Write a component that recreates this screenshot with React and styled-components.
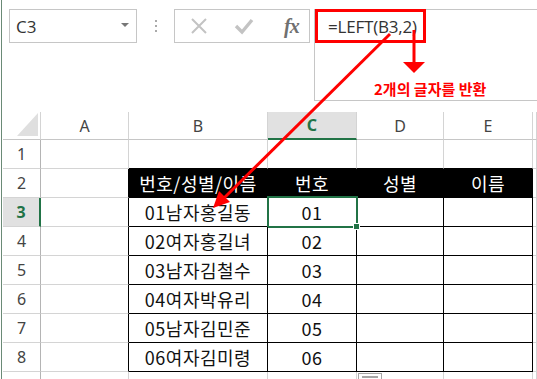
import React from "react";
import styled, { createGlobalStyle, css } from "styled-components";

const GREEN = "#217346";
const GRID = "#d4d4d4";

const Global = createGlobalStyle`
  html, body { margin: 0; padding: 0; background: #fff; overflow: hidden; }
  body { font-family: "Noto Sans", "Noto Sans CJK KR", sans-serif; }
`;

const Page = styled.div`
  position: relative;
  width: 537px;
  height: 379px;
  padding-left: 3px;
  box-sizing: border-box;
  overflow: hidden;
  &::before {
    content: "";
    position: absolute;
    left: 1px;
    top: 0;
    bottom: 0;
    width: 1px;
    background: #6a8a76;
  }
`;

const FormulaRow = styled.div`
  display: flex;
  align-items: flex-start;
  height: 112px;
  padding-top: 9px;
  box-sizing: border-box;
`;

const NameBox = styled.div`
  margin-left: 6px;
  width: 128px;
  height: 34px;
  box-sizing: border-box;
  border: 1px solid #c6c6c6;
  display: flex;
  align-items: center;
  justify-content: space-between;
  padding: 0 7px 0 6px;
  font-family: "Open Sans", sans-serif;
  font-size: 17px;
  color: #333;
`;

const Caret = styled.span`
  width: 0;
  height: 0;
  border-left: 4px solid transparent;
  border-right: 4px solid transparent;
  border-top: 4px solid #777;
  margin-top: -2px;
`;

const Dots = styled.div`
  width: 37px;
  height: 34px;
  display: flex;
  flex-direction: column;
  align-items: center;
  justify-content: center;
  gap: 3px;
  span {
    width: 2px;
    height: 2px;
    background: #aaa;
  }
`;

const FuncBox = styled.div`
  width: 136px;
  height: 34px;
  box-sizing: border-box;
  border: 1px solid #c6c6c6;
  display: flex;
  align-items: center;
  padding-left: 15px;
  gap: 26px;
`;

const Fx = styled.span`
  font-family: "Liberation Serif", serif;
  font-style: italic;
  font-weight: bold;
  font-size: 20px;
  color: #707070;
  letter-spacing: -1px;
  margin-left: 4px;
`;

const FormulaBar = styled.div`
  margin-left: 4px;
  flex: 1;
  height: 92px;
  box-sizing: border-box;
  border: 1px solid #c6c6c6;
  border-right: none;
  padding: 5px 0 0 13px;
  font-family: "Open Sans", sans-serif;
  font-size: 17px;
  letter-spacing: -0.2px;
  color: #333;
`;

const Sheet = styled.div`
  display: grid;
  grid-template-columns: 38px 88px 139px 89px 87px 89px 1fr;
  grid-template-rows: 28px;
  grid-auto-rows: 29px;
`;

const Corner = styled.div`
  position: relative;
  border-right: 1px solid ${GRID};
  border-bottom: 1px solid #c6c6c6;
  &::after {
    content: "";
    position: absolute;
    left: 14px;
    top: 1px;
    width: 21px;
    height: 23px;
    background: #dfdfdf;
    clip-path: polygon(100% 0, 100% 100%, 0 100%);
  }
`;

const ColHead = styled.div`
  display: flex;
  align-items: center;
  justify-content: center;
  font-family: "Noto Sans", sans-serif;
  font-size: 16px;
  color: #444;
  border-right: 1px solid ${GRID};
  border-bottom: 1px solid #c6c6c6;
  ${(p) =>
    p.$active &&
    css`
      background: #e1e1e1;
      color: ${GREEN};
      font-weight: bold;
      border-bottom: 2px solid ${GREEN};
    `}
`;

const RowHead = styled.div`
  display: flex;
  align-items: center;
  justify-content: center;
  font-family: "Noto Sans", sans-serif;
  font-size: 16px;
  color: #444;
  border-right: 1px solid #b4b4b4;
  border-bottom: 1px solid ${GRID};
  ${(p) =>
    p.$active &&
    css`
      background: #e1e1e1;
      color: ${GREEN};
      font-weight: bold;
      border-right: 2px solid ${GREEN};
    `}
`;

const Cell = styled.div`
  position: relative;
  display: flex;
  align-items: center;
  justify-content: center;
  font-family: "Noto Sans CJK KR", sans-serif;
  font-size: 18px;
  letter-spacing: 0.5px;
  color: #111;
  border-right: 1px solid ${(p) => p.$right || GRID};
  border-bottom: 1px solid ${(p) => p.$bottom || GRID};
  ${(p) =>
    p.$head &&
    css`
      background: #000;
      color: #fff;
    `}
  ${(p) =>
    p.$selected &&
    css`
      &::after {
        content: "";
        position: absolute;
        left: -1px;
        top: -2px;
        right: -2px;
        bottom: -2px;
        border: 2px solid ${GREEN};
      }
      &::before {
        content: "";
        position: absolute;
        right: -4px;
        bottom: -4px;
        width: 5px;
        height: 5px;
        background: ${GREEN};
        border: 1px solid #fff;
        z-index: 2;
      }
    `}
`;

const Overlay = styled.svg`
  position: absolute;
  left: 0;
  top: 0;
  pointer-events: none;
`;

const RedBox = styled.div`
  position: absolute;
  left: 315px;
  top: 9px;
  width: 111px;
  height: 34px;
  box-sizing: border-box;
  border: 3px solid #ff0000;
`;

const Note = styled.div`
  position: absolute;
  left: 374px;
  top: 79px;
  line-height: 20px;
  font-family: "Noto Sans CJK KR", sans-serif;
  font-weight: bold;
  font-size: 15px;
  color: #ff0000;
  white-space: nowrap;
`;

const FillOptions = styled.div`
  position: absolute;
  left: 358px;
  top: 373px;
  width: 24px;
  height: 12px;
  box-sizing: border-box;
  border: 1px solid #a6a6a6;
  background: #fff;
  &::after {
    content: "";
    position: absolute;
    left: 3px;
    right: 3px;
    top: 2px;
    height: 2px;
    background: #a6a6a6;
  }
`;

const cols = ["A", "B", "C", "D", "E", ""];
const data = [
  ["01남자홍길동", "01"],
  ["02여자홍길녀", "02"],
  ["03남자김철수", "03"],
  ["04여자박유리", "04"],
  ["05남자김민준", "05"],
  ["06여자김미령", "06"],
];

function rowCells(r) {
  const inTable = r >= 2 && r <= 8;
  const head = r === 2;
  const dataRow = r >= 3 && r <= 8 ? data[r - 3] : null;
  const values = head
    ? ["", "번호/성별/이름", "번호", "성별", "이름", ""]
    : dataRow
    ? ["", dataRow[0], dataRow[1], "", "", ""]
    : ["", "", "", "", "", ""];

  return values.map((v, i) => {
    const tableCol = i >= 1 && i <= 4;
    let right;
    let bottom;
    if (inTable && (tableCol || i === 0)) right = "#000";
    if ((inTable && tableCol) || (r === 1 && tableCol)) bottom = "#000";
    return (
      <Cell
        key={i}
        $right={right}
        $bottom={bottom}
        $head={head && tableCol}
        $selected={r === 3 && i === 2}
      >
        {v}
      </Cell>
    );
  });
}

export default function App() {
  return (
    <>
      <Global />
      <Page>
        <FormulaRow>
          <NameBox>
            C3
            <Caret />
          </NameBox>
          <Dots>
            <span />
            <span />
            <span />
          </Dots>
          <FuncBox>
            <svg width="18" height="18" viewBox="0 0 18 18">
              <path d="M2 2 L16 16 M16 2 L2 16" stroke="#c3c3c3" strokeWidth="2" fill="none" />
            </svg>
            <svg width="20" height="18" viewBox="0 0 20 18">
              <path d="M2 9 L8 15 L18 3" stroke="#c3c3c3" strokeWidth="3.4" fill="none" />
            </svg>
            <Fx>fx</Fx>
          </FuncBox>
          <FormulaBar>=LEFT(B3,2)</FormulaBar>
        </FormulaRow>

        <Sheet>
          <Corner />
          {cols.map((c) => (
            <ColHead key={c || "f"} $active={c === "C"}>
              {c}
            </ColHead>
          ))}
          {[1, 2, 3, 4, 5, 6, 7, 8, 9].map((r) => (
            <React.Fragment key={r}>
              <RowHead $active={r === 3}>{r < 9 ? r : ""}</RowHead>
              {rowCells(r)}
            </React.Fragment>
          ))}
        </Sheet>

        <RedBox />
        <Note>2개의 글자를 반환</Note>
        <FillOptions />
        <Overlay width="537" height="379" viewBox="0 0 537 379">
          <line x1="414" y1="30" x2="414" y2="63" stroke="#ff0000" strokeWidth="3" />
          <polygon points="403,62 425,62 414,73" fill="#ff0000" />
          <line x1="390" y1="34" x2="222" y2="200" stroke="#ff0000" strokeWidth="3" />
          <polygon points="213,208 219,191 230,202" fill="#ff0000" />
        </Overlay>
      </Page>
    </>
  );
}
